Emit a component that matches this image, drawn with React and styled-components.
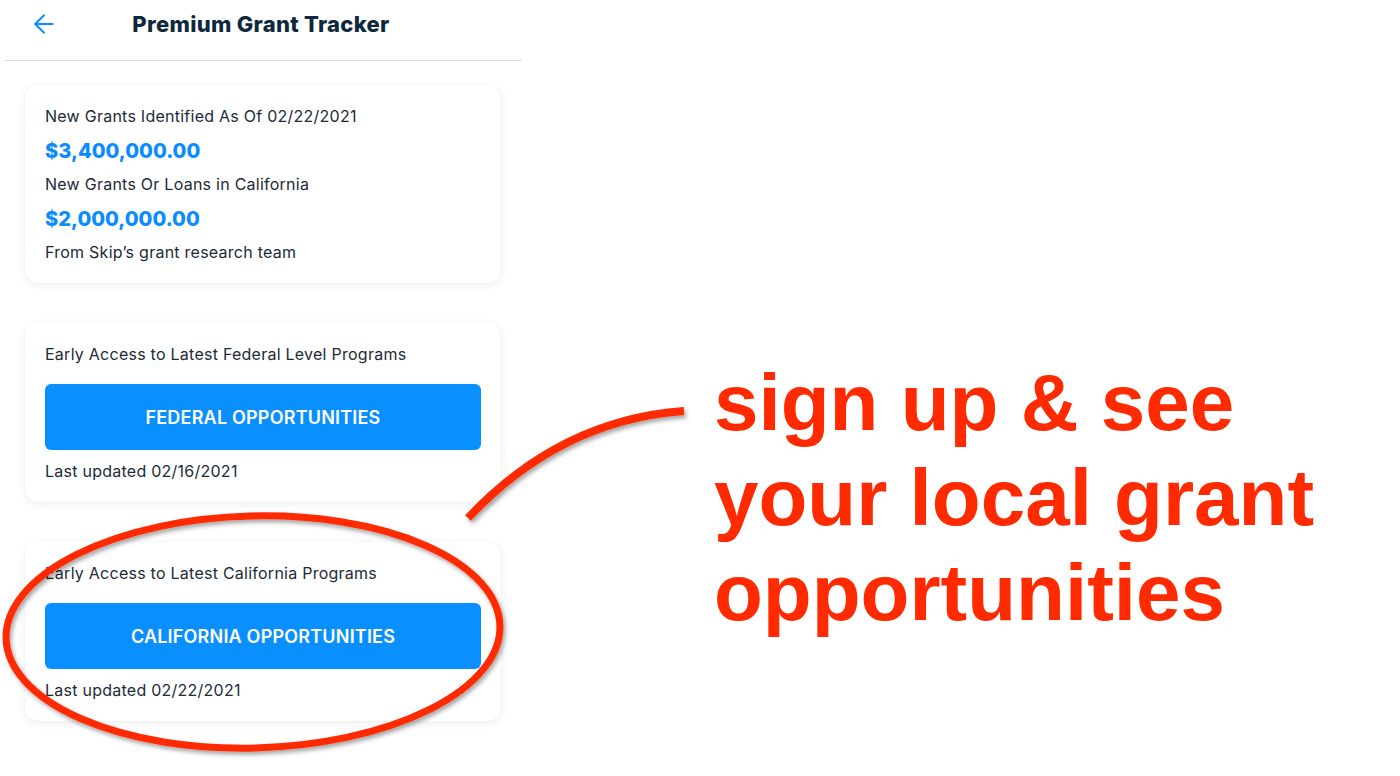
import styled, { createGlobalStyle } from "styled-components";
import { ArrowLeft } from "lucide-react";

const GlobalStyle = createGlobalStyle`
  html, body {
    margin: 0;
    padding: 0;
    background: #ffffff;
  }
  body {
    font-family: "Inter", "Noto Sans", sans-serif;
    color: #1c2b38;
  }
`;

const App = () => {
  return (
    <Page>
      <GlobalStyle />
      <Panel>
        <Header>
          <BackButton aria-label="Back">
            <ArrowLeft size={30} strokeWidth={1.5} />
          </BackButton>
          <Title>Premium Grant Tracker</Title>
        </Header>

        <Cards>
          <Card>
            <Line>New Grants Identified As Of 02/22/2021</Line>
            <Amount>$3,400,000.00</Amount>
            <Line>New Grants Or Loans in California</Line>
            <Amount>$2,000,000.00</Amount>
            <Line>From Skip’s grant research team</Line>
          </Card>

          <Card>
            <Line>Early Access to Latest Federal Level Programs</Line>
            <Button>FEDERAL OPPORTUNITIES</Button>
            <Line $tight>Last updated 02/16/2021</Line>
          </Card>

          <Card>
            <Line>Early Access to Latest California Programs</Line>
            <Button>CALIFORNIA OPPORTUNITIES</Button>
            <Line $tight>Last updated 02/22/2021</Line>
          </Card>
        </Cards>
      </Panel>

      <Callout>
        sign up &amp; see
        <br />
        your local grant
        <br />
        opportunities
      </Callout>

      <Marks viewBox="0 0 1400 776" aria-hidden="true">
        <defs>
          <filter id="markShadow" x="-10%" y="-10%" width="120%" height="120%">
            <feDropShadow dx="2" dy="3" stdDeviation="2" floodColor="#000" floodOpacity="0.35" />
          </filter>
        </defs>
        <g filter="url(#markShadow)" fill="none" stroke="#ff2a00" strokeWidth="7">
          <ellipse cx="253" cy="632" rx="247" ry="116" transform="rotate(-1.5 253 632)" />
          <path d="M468 518 Q560 420 684 411" strokeWidth="8" />
        </g>
      </Marks>
    </Page>
  );
};

export default App;

const Page = styled.div`
  position: relative;
  width: 1400px;
  height: 776px;
  display: flex;
  align-items: flex-start;
  overflow: hidden;
`;

const Panel = styled.div`
  width: 517px;
  margin-left: 5px;
  display: flex;
  flex-direction: column;
`;

const Header = styled.div`
  position: relative;
  height: 61px;
  border-bottom: 1px solid #dedede;
  display: flex;
  align-items: center;
  justify-content: center;
  padding-right: 5px;
  box-sizing: border-box;
`;

const BackButton = styled.button`
  position: absolute;
  left: 24px;
  top: 9px;
  border: none;
  background: none;
  padding: 0;
  color: #0a8cff;
  display: flex;
  cursor: pointer;
`;

const Title = styled.h1`
  margin: 0 0 12px;
  font-family: "Inter", "Noto Sans", sans-serif;
  font-size: 22px;
  font-weight: 800;
  color: #10283b;
  letter-spacing: 0.3px;
`;

const Cards = styled.div`
  display: flex;
  flex-direction: column;
  gap: 40px;
  padding: 24px 21px 0 20px;
`;

const Card = styled.div`
  background: #ffffff;
  border-radius: 14px;
  box-shadow: 0 2px 10px rgba(0, 0, 0, 0.07), 0 0 2px rgba(0, 0, 0, 0.04);
  padding: 14px 20px;
  display: flex;
  flex-direction: column;
`;

const Line = styled.div`
  font-size: 16px;
  line-height: 34px;
  letter-spacing: 0.25px;
  color: #1c2b38;
  margin-top: ${(p) => (p.$tight ? "4px" : "0")};
`;

const Amount = styled.div`
  font-size: 20px;
  line-height: 34px;
  font-weight: 800;
  color: #0a8cff;
  transform: translateY(1px);
`;

const Button = styled.button`
  margin-top: 13px;
  height: 66px;
  width: 100%;
  border: none;
  border-radius: 6px;
  background: #0a8fff;
  color: #ffffff;
  font-family: "Inter", "Noto Sans", sans-serif;
  font-size: 18px;
  font-weight: 600;
  letter-spacing: 0.2px;
  cursor: pointer;
`;

const Callout = styled.div`
  margin-left: 192px;
  margin-top: 355px;
  font-family: "Liberation Sans", Arial, sans-serif;
  font-weight: 700;
  font-size: 80px;
  line-height: 95px;
  color: #ff2a00;
  white-space: nowrap;
`;

const Marks = styled.svg`
  position: absolute;
  left: 0;
  top: 0;
  width: 1400px;
  height: 776px;
  pointer-events: none;
`;
